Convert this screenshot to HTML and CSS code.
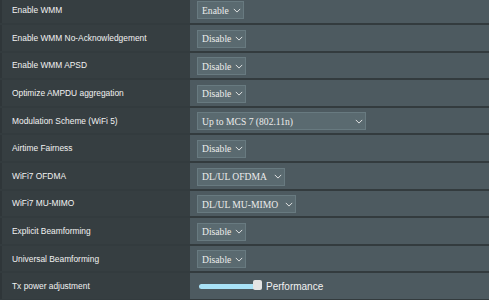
FILE: index.html
```html
<!DOCTYPE html>
<html lang="en">
<head>
    <meta charset="UTF-8">
    <meta name="viewport" content="width=device-width, initial-scale=1.0">
    <title>Wireless - Professional</title>
    <link rel="stylesheet" href="styles.css">
</head>
<body>
    <table class="settings">
        <tbody>
            <tr>
                <th>Enable WMM</th>
                <td><div class="select">Enable<svg class="chev" viewBox="0 0 10 6"><path d="M1 1l4 4 4-4"/></svg></div></td>
            </tr>
            <tr>
                <th>Enable WMM No-Acknowledgement</th>
                <td><div class="select">Disable<svg class="chev" viewBox="0 0 10 6"><path d="M1 1l4 4 4-4"/></svg></div></td>
            </tr>
            <tr>
                <th>Enable WMM APSD</th>
                <td><div class="select">Disable<svg class="chev" viewBox="0 0 10 6"><path d="M1 1l4 4 4-4"/></svg></div></td>
            </tr>
            <tr>
                <th>Optimize AMPDU aggregation</th>
                <td><div class="select">Disable<svg class="chev" viewBox="0 0 10 6"><path d="M1 1l4 4 4-4"/></svg></div></td>
            </tr>
            <tr>
                <th>Modulation Scheme (WiFi 5)</th>
                <td><div class="select wide">Up to MCS 7 (802.11n)<svg class="chev" viewBox="0 0 10 6"><path d="M1 1l4 4 4-4"/></svg></div></td>
            </tr>
            <tr>
                <th>Airtime Fairness</th>
                <td><div class="select">Disable<svg class="chev" viewBox="0 0 10 6"><path d="M1 1l4 4 4-4"/></svg></div></td>
            </tr>
            <tr>
                <th>WiFi7 OFDMA</th>
                <td><div class="select">DL/UL OFDMA<svg class="chev gap" viewBox="0 0 10 6"><path d="M1 1l4 4 4-4"/></svg></div></td>
            </tr>
            <tr>
                <th>WiFi7 MU-MIMO</th>
                <td><div class="select">DL/UL MU-MIMO<svg class="chev gap" viewBox="0 0 10 6"><path d="M1 1l4 4 4-4"/></svg></div></td>
            </tr>
            <tr>
                <th>Explicit Beamforming</th>
                <td><div class="select">Disable<svg class="chev" viewBox="0 0 10 6"><path d="M1 1l4 4 4-4"/></svg></div></td>
            </tr>
            <tr>
                <th>Universal Beamforming</th>
                <td><div class="select">Disable<svg class="chev" viewBox="0 0 10 6"><path d="M1 1l4 4 4-4"/></svg></div></td>
            </tr>
            <tr>
                <th>Tx power adjustment</th>
                <td>
                    <div class="power">
                        <div class="slider">
                            <div class="track"></div>
                            <div class="thumb"></div>
                        </div>
                        <span class="power-label">Performance</span>
                    </div>
                </td>
            </tr>
        </tbody>
    </table>
</body>
</html>
```

FILE: styles.css
```css
body {
    margin: 0;
    background-color: #4d5a60;
    font-family: "Liberation Sans", Arial, sans-serif;
    overflow: hidden;
}
.settings {
    width: 100%;
    border-collapse: collapse;
    margin-top: -3.6px;
}
.settings tr {
    height: 27.6px;
}
.settings th,
.settings td {
    padding: 0;
    border-bottom: 2px solid #333b3e;
    vertical-align: middle;
}
.settings th {
    width: 178px;
    padding-left: 10px;
    background-color: #363e41;
    border-left: 2px solid #2f3639;
    color: #f2f2f2;
    font-size: 8.4px;
    font-weight: normal;
    text-align: left;
}
.settings td {
    padding-left: 7px;
    background-color: #4d5a60;
}
.select {
    display: inline-flex;
    align-items: center;
    height: 16px;
    padding: 0 2px 0 4px;
    background-color: #5a6a70;
    border: 1px solid #687a80;
    color: #ececec;
    font-family: "Liberation Serif", "Times New Roman", serif;
    font-size: 9.6px;
}
.select.wide {
    width: 161px;
    justify-content: space-between;
}
.chev {
    width: 8px;
    height: 5px;
    margin-left: 4px;
    fill: none;
    stroke: #e6e6e6;
    stroke-width: 1.2;
}
.chev.gap {
    margin-left: 7px;
}
.power {
    display: flex;
    align-items: center;
}
.slider {
    position: relative;
    width: 65px;
    height: 10px;
}
.track {
    position: absolute;
    left: 2px;
    right: 4px;
    top: 3px;
    height: 5px;
    border-radius: 3px;
    background-color: #a9e2f7;
}
.thumb {
    position: absolute;
    right: 0;
    top: -1px;
    width: 9px;
    height: 10px;
    border-radius: 2px;
    background-color: #e4e4e4;
}
.power-label {
    margin-left: 4px;
    color: #f2f2f2;
    font-size: 10px;
}
```
